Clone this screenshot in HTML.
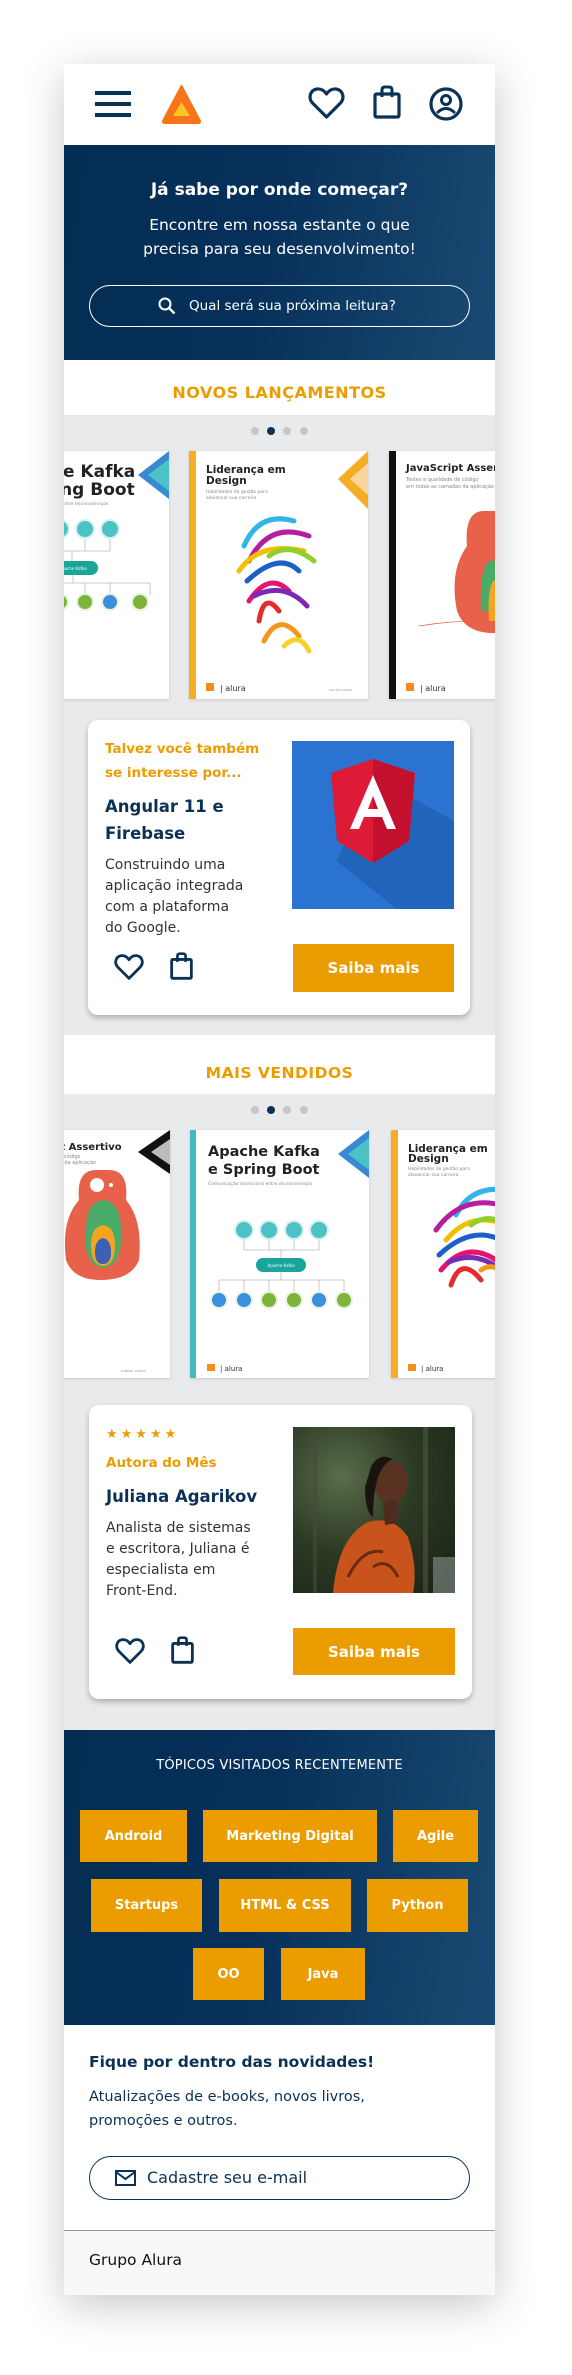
<!DOCTYPE html>
<html><head><meta charset="utf-8"><style>
*{margin:0;padding:0;box-sizing:border-box}
body{width:572px;height:2375px;background:#fff;position:relative;overflow:hidden;font-family:"DejaVu Sans","Liberation Sans",sans-serif}
#f{position:absolute;left:64px;top:64px;width:431px;height:2231px;background:#e9eaec;overflow:hidden;box-shadow:0 10px 40px rgba(0,0,0,.22)}
.a{position:absolute}
.t{position:absolute;left:0;width:100%;text-align:center;white-space:nowrap}
.card{position:absolute;background:#fff;border-radius:10px;box-shadow:0 3px 6px rgba(0,0,0,.25)}
.btn{position:absolute;background:#eb9c00;color:#fff;font-weight:bold;font-size:15px;display:flex;align-items:center;justify-content:center}
.tag{position:absolute;background:#eb9c00;color:#fff;font-weight:bold;font-size:13px;display:flex;align-items:center;justify-content:center}
.dot{position:absolute;width:8px;height:8px;border-radius:50%;background:#c4c6c9}
.bk{position:absolute;width:179px;height:248px;background:#fff;overflow:hidden;box-shadow:0 1px 3px rgba(0,0,0,.15)}
</style></head><body>
<div id="f">
<!-- header -->
<div class="a" style="left:0;top:0;width:431px;height:81px;background:#fff"></div>
<div class="a" style="left:31px;top:27px;width:36px;height:4px;background:#0b3157"></div>
<div class="a" style="left:31px;top:38px;width:36px;height:4px;background:#0b3157"></div>
<div class="a" style="left:31px;top:49px;width:36px;height:4px;background:#0b3157"></div>
<svg class="a" style="left:97px;top:20px" width="41" height="40" viewBox="0 0 41 40"><path d="M20.5 2 L39 37 Q39.5 39 37 39 L4 39 Q1.5 39 2 37 Z" fill="#f7731c" stroke="#f7731c" stroke-linejoin="round" stroke-width="2"/><path d="M20.5 18 L29 32 L12 32 Z" fill="#f9c623"/></svg>
<svg class="a" style="left:244px;top:22px" width="37" height="34" viewBox="0 0 37 34"><path d="M18.5 31 L4.5 17 C0 12 2 4 9 3 C13 2.5 16.5 5 18.5 8 C20.5 5 24 2.5 28 3 C35 4 37 12 32.5 17 Z" fill="none" stroke="#0b3157" stroke-width="3.2" stroke-linejoin="round"/></svg>
<svg class="a" style="left:309px;top:21px" width="28" height="34" viewBox="0 0 28 34"><rect x="2" y="9" width="24" height="23" rx="1.5" fill="none" stroke="#0b3157" stroke-width="3.2"/><path d="M9 12 V5 Q9 2 12 2 H16 Q19 2 19 5 V12" fill="none" stroke="#0b3157" stroke-width="3"/></svg>
<svg class="a" style="left:365px;top:23px" width="34" height="34" viewBox="0 0 34 34"><circle cx="17" cy="17" r="15" fill="none" stroke="#0b3157" stroke-width="3.2"/><circle cx="17" cy="13" r="4.5" fill="none" stroke="#0b3157" stroke-width="3"/><path d="M8 26 Q17 17 26 26" fill="none" stroke="#0b3157" stroke-width="3"/></svg>
<!-- hero -->
<div class="a" style="left:0;top:81px;width:431px;height:215px;background:linear-gradient(100deg,#032d52 0%,#06305a 45%,#1a4a73 100%)"></div>
<div class="t" style="top:115px;line-height:22px;font-size:17px;font-weight:bold;color:#fff">Já sabe por onde começar?</div>
<div class="t" style="top:149px;line-height:24px;font-size:15.5px;color:#fff">Encontre em nossa estante o que<br>precisa para seu desenvolvimento!</div>
<div class="a" style="left:25px;top:221px;width:381px;height:42px;border:1.5px solid #fff;border-radius:21px"></div>
<svg class="a" style="left:94px;top:233px" width="18" height="18" viewBox="0 0 18 18"><circle cx="7" cy="7" r="5.5" fill="none" stroke="#fff" stroke-width="2"/><path d="M11 11 L16.5 16.5" stroke="#fff" stroke-width="2.4"/></svg>
<div class="a" style="left:125px;top:233px;line-height:18px;font-size:13.5px;color:#fff;white-space:nowrap">Qual será sua próxima leitura?</div>
<!-- novos -->
<div class="a" style="left:0;top:296px;width:431px;height:55px;background:#fff"></div>
<div class="t" style="top:318px;line-height:22px;font-size:16px;font-weight:bold;color:#eb9c00;letter-spacing:.5px">NOVOS LANÇAMENTOS</div>
<div class="dot" style="left:187px;top:363px"></div><div class="dot" style="left:203px;top:363px;background:#0b3157"></div><div class="dot" style="left:219px;top:363px"></div><div class="dot" style="left:236px;top:363px"></div>

<!-- book kafka partial -->
<div class="bk" style="left:-74px;top:387px">
<svg width="179" height="248" viewBox="0 0 179 248"><rect x="0" y="0" width="6" height="248" fill="#45b8c1"/>
<text x="14" y="26" font-family="DejaVu Sans" font-size="17" font-weight="bold" fill="#222">Apache Kafka</text><text x="14" y="44" font-family="DejaVu Sans" font-size="17" font-weight="bold" fill="#222">e Spring Boot</text>
<text x="14" y="54" font-size="4.5" fill="#888">Comunicação assíncrona entre microsserviços</text>
<path d="M179 0 L148 24 L179 48 Z" fill="#3789d3"/><path d="M179 8 L158 24 L179 40 Z" fill="#4cc2c6"/>
<g fill="#4cc2c6" stroke="#d8f0f0" stroke-width="2"><circle cx="45" cy="78" r="9"/><circle cx="70" cy="78" r="9"/><circle cx="95" cy="78" r="9"/><circle cx="120" cy="78" r="9"/></g>
<path d="M45 88 V100 H120 V88 M70 88V100 M95 88V100 M82 100V110" stroke="#bbb" fill="none" stroke-width=".8"/>
<rect x="58" y="110" width="50" height="14" rx="7" fill="#1aa59a"/><text x="83" y="119" font-size="4" fill="#fff" text-anchor="middle">Apache Kafka</text>
<path d="M83 124 V132 M20 144 V132 H160 V144 M45 132V144 M70 132V144 M95 132V144 M120 132V144" stroke="#bbb" fill="none" stroke-width=".8"/>
<g stroke="#e8f3e0" stroke-width="2"><circle cx="20" cy="151" r="8" fill="#3c8fdc"/><circle cx="45" cy="151" r="8" fill="#3c8fdc"/><circle cx="70" cy="151" r="8" fill="#7cb53a"/><circle cx="95" cy="151" r="8" fill="#7cb53a"/><circle cx="120" cy="151" r="8" fill="#3c8fdc"/><circle cx="150" cy="151" r="8" fill="#7cb53a"/></g>
<rect x="14" y="232" width="8" height="8" fill="#f58c1f"/><text x="28" y="240" font-size="8" fill="#333">| alura</text></svg></div>
<!-- book lideranca -->
<div class="bk" style="left:125px;top:387px">
<svg width="179" height="248" viewBox="0 0 179 248"><rect x="0" y="0" width="7" height="248" fill="#f5ad24"/>
<text x="17" y="22" font-size="10.5" font-weight="bold" fill="#222">Liderança em</text><text x="17" y="33" font-size="10.5" font-weight="bold" fill="#222">Design</text>
<text x="17" y="42" font-size="4.5" fill="#888">Habilidades de gestão para</text><text x="17" y="48" font-size="4.5" fill="#888">alavancar sua carreira</text>
<path d="M179 0 L149 28 L179 58 Z" fill="#f5ad24"/><path d="M179 12 L161 28 L179 44 Z" fill="#fcd59d"/>
<g fill="none" stroke-width="5" stroke-linecap="round"><path d="M55 95 Q70 60 105 70" stroke="#2fb5e8"/><path d="M60 110 Q80 70 120 85" stroke="#b51ea0"/><path d="M50 120 Q70 90 115 100" stroke="#f0c000"/><path d="M58 130 Q90 100 110 120" stroke="#1b5fc8"/><path d="M60 150 Q80 120 100 140" stroke="#e4156d"/><path d="M70 170 Q75 140 90 160" stroke="#e52b2b"/><path d="M75 190 Q90 160 110 185" stroke="#f2961e"/><path d="M80 105 Q100 90 125 110" stroke="#8fcf2d"/><path d="M65 145 Q95 130 118 155" stroke="#7a2ab5"/><path d="M95 195 Q110 180 120 200" stroke="#f5d22a"/></g>
<rect x="17" y="232" width="8" height="8" fill="#f58c1f"/><text x="31" y="240" font-size="8" fill="#333">| alura</text><text x="140" y="240" font-size="3" fill="#999">VICTOR ZANINI</text></svg></div>
<!-- book js -->
<div class="bk" style="left:325px;top:387px">
<svg width="179" height="248" viewBox="0 0 179 248"><rect x="0" y="0" width="7" height="248" fill="#111"/>
<text x="17" y="20" font-size="10" font-weight="bold" fill="#222">JavaScript Assertivo</text>
<text x="17" y="30" font-size="5" fill="#888">Testes e qualidade de código</text><text x="17" y="37" font-size="5" fill="#888">em todas as camadas da aplicação</text>
<path d="M95 60 Q75 60 78 95 Q60 120 68 160 Q75 180 100 182 L110 182 V60 Z" fill="#e8614a"/><path d="M100 110 Q90 120 92 160 L110 160 V110Z" fill="#4bac6a"/><path d="M104 130 Q98 140 100 170 L110 170 V130Z" fill="#f2a51e"/><path d="M30 175 Q60 170 90 170" stroke="#e8614a" fill="none" stroke-width=".8"/>
<rect x="17" y="232" width="8" height="8" fill="#f58c1f"/><text x="31" y="240" font-size="8" fill="#333">| alura</text></svg></div>

<!-- card 1 -->
<div class="card" style="left:24px;top:656px;width:382px;height:295px">
<div class="a" style="left:17px;top:17px;line-height:24px;font-size:13.5px;font-weight:bold;color:#eb9c00;white-space:nowrap">Talvez você também<br>se interesse por...</div>
<div class="a" style="left:17px;top:73px;line-height:27px;font-size:16.5px;font-weight:bold;color:#0b3157;white-space:nowrap">Angular 11 e<br>Firebase</div>
<div class="a" style="left:17px;top:135px;line-height:21px;font-size:14px;color:#333;white-space:nowrap">Construindo uma<br>aplicação integrada<br>com a plataforma<br>do Google.</div>
<svg class="a" style="left:204px;top:21px" width="162" height="168" viewBox="0 0 162 168"><rect width="162" height="168" fill="#2a73d0"/><path d="M81 35 L162 80 L162 168 L105 168 L45 120 Z" fill="#1f5eb0" opacity=".7"/><path d="M81 18 L123 32 L117 100 L81 122 L45 100 L39 32 Z" fill="#dd1b36"/><path d="M81 18 L123 32 L117 100 L81 122Z" fill="#c3102f"/><path d="M81 34 L58 88 H67 L72 76 H90 L95 88 H104 Z M76 68 L81 55 L86 68Z" fill="#fff"/></svg>
<svg class="a" style="left:26px;top:233px" width="30" height="28" viewBox="0 0 37 34"><path d="M18.5 31 L4.5 17 C0 12 2 4 9 3 C13 2.5 16.5 5 18.5 8 C20.5 5 24 2.5 28 3 C35 4 37 12 32.5 17 Z" fill="none" stroke="#0b3157" stroke-width="3.4" stroke-linejoin="round"/></svg>
<svg class="a" style="left:82px;top:232px" width="23" height="28" viewBox="0 0 28 34"><rect x="2" y="9" width="24" height="23" rx="1.5" fill="none" stroke="#0b3157" stroke-width="3.4"/><path d="M9 12 V5 Q9 2 12 2 H16 Q19 2 19 5 V12" fill="none" stroke="#0b3157" stroke-width="3.2"/></svg>
<div class="btn" style="left:205px;top:224px;width:161px;height:48px">Saiba mais</div>
</div>

<!-- mais vendidos -->
<div class="a" style="left:0;top:971px;width:431px;height:59px;background:#fff"></div>
<div class="t" style="top:998px;line-height:22px;font-size:15.5px;font-weight:bold;color:#eb9c00;letter-spacing:.5px">MAIS VENDIDOS</div>
<div class="dot" style="left:187px;top:1042px"></div><div class="dot" style="left:203px;top:1042px;background:#0b3157"></div><div class="dot" style="left:219px;top:1042px"></div><div class="dot" style="left:236px;top:1042px"></div>
<!-- assertivo partial -->
<div class="bk" style="left:-73px;top:1066px">
<svg width="179" height="248" viewBox="0 0 179 248"><rect width="7" height="248" fill="#111"/>
<text x="17" y="20" font-size="10" font-weight="bold" fill="#222">JavaScript Assertivo</text>
<text x="17" y="28" font-size="5" fill="#888">Testes e qualidade de código</text><text x="17" y="34" font-size="5" fill="#888">em todas as camadas da aplicação</text>
<path d="M179 0 L147 22 L179 44 Z" fill="#111"/><path d="M179 9 L160 22 L179 35Z" fill="#bbb"/>
<path d="M105 40 Q85 40 88 70 Q70 90 75 130 Q82 150 110 150 Q140 150 148 130 Q152 90 135 70 Q138 40 118 40 Z" fill="#e8614a"/>
<path d="M112 70 Q95 72 95 100 Q92 135 112 138 Q132 135 130 100 Q130 72 112 70Z" fill="#4bac6a"/>
<path d="M112 95 Q100 97 100 115 Q100 135 112 136 Q124 135 124 115 Q124 97 112 95Z" fill="#f2a51e"/>
<path d="M112 108 Q104 110 104 122 Q104 134 112 134 Q120 134 120 122 Q120 110 112 108Z" fill="#3c5fb8"/>
<circle cx="106" cy="55" r="7" fill="#fff"/><circle cx="120" cy="55" r="2" fill="#fff"/>
<text x="130" y="242" font-size="3" fill="#999">GABRIEL RAMOS</text></svg></div>
<!-- kafka full -->
<div class="bk" style="left:126px;top:1066px">
<svg width="179" height="248" viewBox="0 0 179 248"><rect x="0" y="0" width="6" height="248" fill="#45b8c1"/>
<text x="18" y="26" font-family="DejaVu Sans" font-size="14.5" font-weight="bold" fill="#222">Apache Kafka</text><text x="18" y="44" font-family="DejaVu Sans" font-size="14.5" font-weight="bold" fill="#222">e Spring Boot</text>
<text x="18" y="55" font-size="4.5" fill="#888">Comunicação assíncrona entre microsserviços</text>
<path d="M179 0 L148 24 L179 48 Z" fill="#3789d3"/><path d="M179 8 L158 24 L179 40 Z" fill="#4cc2c6"/>
<g fill="#4cc2c6" stroke="#d8f0f0" stroke-width="2"><circle cx="54" cy="100" r="9"/><circle cx="79" cy="100" r="9"/><circle cx="104" cy="100" r="9"/><circle cx="129" cy="100" r="9"/></g>
<path d="M54 110 V120 H129 V110 M79 110V120 M104 110V120 M91 120V128" stroke="#bbb" fill="none" stroke-width=".8"/>
<rect x="66" y="128" width="50" height="14" rx="7" fill="#1aa59a"/><text x="91" y="137" font-size="4" fill="#fff" text-anchor="middle">Apache Kafka</text>
<path d="M91 142 V150 M29 162 V150 H154 V162 M54 150V162 M79 150V162 M104 150V162 M129 150V162" stroke="#bbb" fill="none" stroke-width=".8"/>
<g stroke="#e8f3e0" stroke-width="2"><circle cx="29" cy="170" r="8" fill="#3c8fdc"/><circle cx="54" cy="170" r="8" fill="#3c8fdc"/><circle cx="79" cy="170" r="8" fill="#7cb53a"/><circle cx="104" cy="170" r="8" fill="#7cb53a"/><circle cx="129" cy="170" r="8" fill="#3c8fdc"/><circle cx="154" cy="170" r="8" fill="#7cb53a"/></g>
<rect x="17" y="234" width="8" height="7" fill="#f58c1f"/><text x="30" y="241" font-size="7" fill="#333">| alura</text></svg></div>
<!-- lideranca partial -->
<div class="bk" style="left:327px;top:1066px">
<svg width="179" height="248" viewBox="0 0 179 248"><rect x="0" y="0" width="7" height="248" fill="#f5ad24"/>
<text x="17" y="22" font-size="10.5" font-weight="bold" fill="#222">Liderança em</text><text x="17" y="32" font-size="10.5" font-weight="bold" fill="#222">Design</text>
<text x="17" y="40" font-size="4.5" fill="#888">Habilidades de gestão para</text><text x="17" y="46" font-size="4.5" fill="#888">alavancar sua carreira</text>
<g fill="none" stroke-width="5" stroke-linecap="round"><path d="M65 85 Q80 55 115 60" stroke="#2fb5e8"/><path d="M45 100 Q70 65 110 75" stroke="#b51ea0"/><path d="M55 110 Q80 80 115 95" stroke="#f0c000"/><path d="M48 125 Q80 95 110 110" stroke="#1b5fc8"/><path d="M50 140 Q75 110 105 130" stroke="#e4156d"/><path d="M60 155 Q70 125 90 150" stroke="#e52b2b"/><path d="M80 95 Q100 80 120 100" stroke="#8fcf2d"/><path d="M58 132 Q85 120 110 140" stroke="#7a2ab5"/><path d="M90 140 Q105 130 115 150" stroke="#f2961e"/></g>
<rect x="17" y="234" width="8" height="7" fill="#f58c1f"/><text x="30" y="241" font-size="7" fill="#333">| alura</text></svg></div>

<!-- card 2 -->
<div class="card" style="left:25px;top:1341px;width:383px;height:294px">
<div class="a" style="left:17px;top:20px;line-height:20px;font-size:13px;color:#eb9c00;letter-spacing:3px;white-space:nowrap">★★★★★</div>
<div class="a" style="left:17px;top:47px;line-height:22px;font-size:13.5px;font-weight:bold;color:#eb9c00;white-space:nowrap">Autora do Mês</div>
<div class="a" style="left:17px;top:80px;line-height:24px;font-size:16.5px;font-weight:bold;color:#0b3157;white-space:nowrap">Juliana Agarikov</div>
<div class="a" style="left:17px;top:113px;line-height:21px;font-size:14px;color:#333;white-space:nowrap">Analista de sistemas<br>e escritora, Juliana é<br>especialista em<br>Front-End.</div>
<svg class="a" style="left:204px;top:22px" width="162" height="166" viewBox="0 0 162 166"><defs><radialGradient id="g1" cx=".3" cy=".3" r=".9"><stop offset="0" stop-color="#5b6d4a"/><stop offset=".5" stop-color="#2c3a24"/><stop offset="1" stop-color="#1c2517"/></radialGradient></defs><rect width="162" height="166" fill="url(#g1)"/><rect x="20" y="0" width="4" height="166" fill="#4a4a38" opacity=".6"/><rect x="130" y="0" width="5" height="166" fill="#5a5a48" opacity=".5"/><rect x="140" y="130" width="22" height="36" fill="#9aa8a8" opacity=".5"/><path d="M40 166 Q45 110 75 95 Q100 88 115 110 Q125 140 120 166 Z" fill="#c8531c"/><path d="M55 150 Q70 120 90 125 M80 140 Q95 130 105 150" stroke="#6a2a10" stroke-width="3" fill="none"/><ellipse cx="98" cy="55" rx="17" ry="21" fill="#5a3222"/><path d="M78 40 Q85 25 100 32 Q80 40 80 90 Q72 85 72 60Z" fill="#1a1410"/><path d="M90 75 L92 98 L104 96 L104 72Z" fill="#4e2b1c"/></svg>
<svg class="a" style="left:26px;top:232px" width="30" height="28" viewBox="0 0 37 34"><path d="M18.5 31 L4.5 17 C0 12 2 4 9 3 C13 2.5 16.5 5 18.5 8 C20.5 5 24 2.5 28 3 C35 4 37 12 32.5 17 Z" fill="none" stroke="#0b3157" stroke-width="3.4" stroke-linejoin="round"/></svg>
<svg class="a" style="left:82px;top:231px" width="23" height="28" viewBox="0 0 28 34"><rect x="2" y="9" width="24" height="23" rx="1.5" fill="none" stroke="#0b3157" stroke-width="3.4"/><path d="M9 12 V5 Q9 2 12 2 H16 Q19 2 19 5 V12" fill="none" stroke="#0b3157" stroke-width="3.2"/></svg>
<div class="btn" style="left:204px;top:223px;width:162px;height:47px">Saiba mais</div>
</div>

<!-- topics -->
<div class="a" style="left:0;top:1666px;width:431px;height:295px;background:linear-gradient(100deg,#032d52 0%,#06305a 45%,#1a4a73 100%)"></div>
<div class="t" style="top:1692px;line-height:20px;font-size:13px;color:#fff;letter-spacing:.2px">TÓPICOS VISITADOS RECENTEMENTE</div>
<div class="tag" style="left:16px;top:1746px;width:107px;height:52px">Android</div>
<div class="tag" style="left:139px;top:1746px;width:174px;height:52px">Marketing Digital</div>
<div class="tag" style="left:329px;top:1746px;width:85px;height:52px">Agile</div>
<div class="tag" style="left:27px;top:1815px;width:111px;height:53px">Startups</div>
<div class="tag" style="left:155px;top:1815px;width:132px;height:53px">HTML &amp; CSS</div>
<div class="tag" style="left:303px;top:1815px;width:101px;height:53px">Python</div>
<div class="tag" style="left:129px;top:1884px;width:71px;height:52px">OO</div>
<div class="tag" style="left:217px;top:1884px;width:84px;height:52px">Java</div>

<!-- newsletter -->
<div class="a" style="left:0;top:1961px;width:431px;height:205px;background:#fff"></div>
<div class="a" style="left:25px;top:1986px;line-height:24px;font-size:15.5px;font-weight:bold;color:#0b3157;white-space:nowrap">Fique por dentro das novidades!</div>
<div class="a" style="left:25px;top:2021px;line-height:24px;font-size:14.5px;color:#0b3157;white-space:nowrap">Atualizações de e-books, novos livros,<br>promoções e outros.</div>
<div class="a" style="left:25px;top:2092px;width:381px;height:44px;border:1.5px solid #0b3157;border-radius:22px"></div>
<svg class="a" style="left:51px;top:2106px" width="21" height="16" viewBox="0 0 21 16"><rect x="1" y="1" width="19" height="14" fill="none" stroke="#0b3157" stroke-width="2"/><path d="M1 2 L10.5 9 L20 2" fill="none" stroke="#0b3157" stroke-width="2"/></svg>
<div class="a" style="left:83px;top:2104px;line-height:20px;font-size:16px;color:#0b3157;white-space:nowrap">Cadastre seu e-mail</div>
<div class="a" style="left:0;top:2166px;width:431px;height:65px;background:#f8f8f8;border-top:1px solid #999"></div>
<div class="a" style="left:25px;top:2186px;line-height:20px;font-size:15.5px;color:#111;white-space:nowrap">Grupo Alura</div>
</div>
</body></html>
